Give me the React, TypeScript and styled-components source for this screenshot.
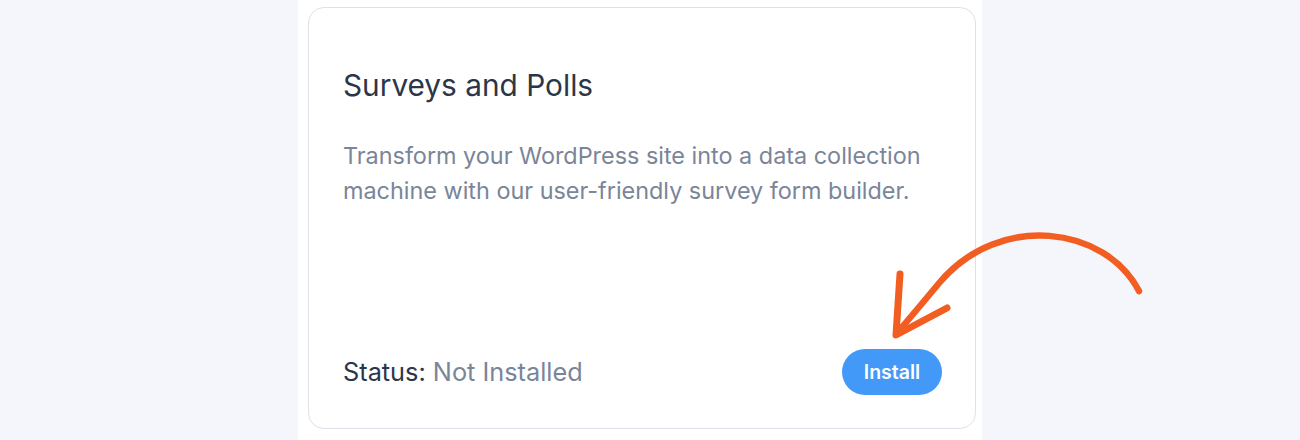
import React from "react";
import styled, { createGlobalStyle } from "styled-components";

const Global = createGlobalStyle`
  html, body { margin: 0; padding: 0; background: #f5f6fb; }
  body { font-family: Inter, "Noto Sans", sans-serif; }
`;

const Page = styled.div`
  position: relative;
  width: 1300px;
  height: 440px;
  overflow: hidden;
  background: #f5f6fb;
`;

const Panel = styled.div`
  margin-left: 298px;
  width: 684px;
  height: 440px;
  box-sizing: border-box;
  padding: 7px 6px 0 10px;
  background: #ffffff;
`;

const Card = styled.div`
  box-sizing: border-box;
  width: 668px;
  height: 422px;
  border: 1px solid #dfe1e8;
  border-radius: 16px;
  padding: 57px 33px 33px 34px;
  display: flex;
  flex-direction: column;
`;

const Title = styled.h2`
  margin: 0;
  font-size: 29.8px;
  line-height: 40px;
  font-weight: 400;
  color: #2b3649;
`;

const Description = styled.p`
  margin: 34px 0 0;
  font-size: 23.4px;
  line-height: 34.5px;
  font-weight: 400;
  color: #7a8599;
`;

const Footer = styled.div`
  margin-top: auto;
  display: flex;
  align-items: center;
  justify-content: space-between;
`;

const Status = styled.div`
  font-size: 25.3px;
  line-height: 30px;
  color: #2b3649;
`;

const StatusValue = styled.span`
  color: #7a8599;
`;

const Button = styled.button`
  width: 100px;
  height: 46px;
  border: none;
  border-radius: 23px;
  background: #4299f8;
  color: #ffffff;
  font-family: Inter, "Noto Sans", sans-serif;
  font-size: 19.5px;
  font-weight: 600;
  cursor: pointer;
  padding: 0;
`;

const Arrow = styled.svg`
  position: absolute;
  left: 870px;
  top: 220px;
  width: 290px;
  height: 130px;
  pointer-events: none;
`;

export default function App() {
  return (
    <>
      <Global />
      <Page>
        <Panel>
          <Card>
            <Title>Surveys and Polls</Title>
            <Description>
              Transform your WordPress site into a data collection machine with our user-friendly survey form builder.
            </Description>
            <Footer>
              <Status>
                Status: <StatusValue>Not Installed</StatusValue>
              </Status>
              <Button>Install</Button>
            </Footer>
          </Card>
        </Panel>
        <Arrow viewBox="870 220 290 130">
          <path
            d="M1139 291 C1105 226 1000 212 940 282 C925 300 910 318 897 333"
            fill="none"
            stroke="#f25e22"
            strokeWidth="6.5"
            strokeLinecap="round"
          />
          <path
            d="M900 274 L896 335 L947 308"
            fill="none"
            stroke="#f25e22"
            strokeWidth="7"
            strokeLinecap="round"
            strokeLinejoin="round"
          />
        </Arrow>
      </Page>
    </>
  );
}
